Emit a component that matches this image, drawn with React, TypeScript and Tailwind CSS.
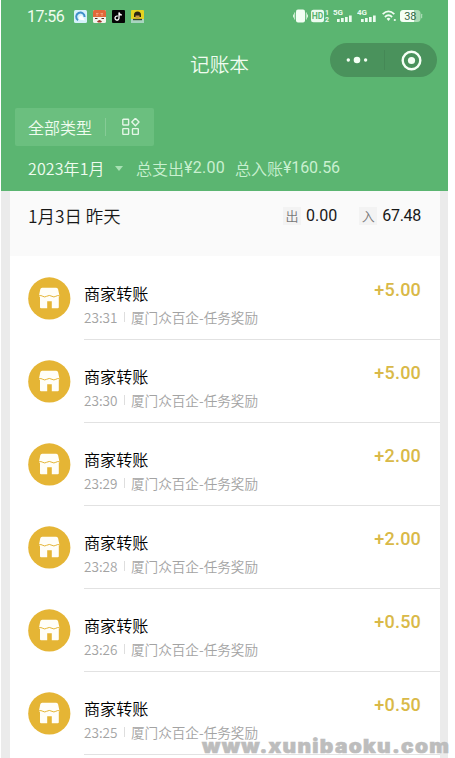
const records = [
    { time: '23:31', amount: '+5.00' },
    { time: '23:30', amount: '+5.00' },
    { time: '23:29', amount: '+2.00' },
    { time: '23:28', amount: '+2.00' },
    { time: '23:26', amount: '+0.50' },
    { time: '23:25', amount: '+0.50' },
]

const AppBadges = () => {
    return (
        <div className="flex gap-[6px] ml-[9px]">
            <svg width="13" height="13" viewBox="0 0 13 13">
                <rect width="13" height="13" rx="1.5" fill="#d5f2fb" />
                <path d="M4 10.2A4.2 4.2 0 1 1 10.6 7" fill="none" stroke="#3f8fc9" strokeWidth="2" />
                <path d="M5 9.5A3 3 0 0 1 8 5.5L11 10.5Z" fill="#fff" />
            </svg>
            <svg width="13" height="13" viewBox="0 0 13 13">
                <rect width="13" height="13" rx="1.5" fill="#f4f3ec" />
                <path d="M1.5 0H11.5Q13 0 13 1.5V7H0V1.5Q0 0 1.5 0Z" fill="#e2683a" />
                <path d="M3 3.5H5.5M7.5 3.5H10M3 5H5M8 5H10" stroke="#f7b08d" strokeWidth="0.8" />
                <path d="M2 8.5H4.5M8.5 8.5H11" stroke="#5a2b20" strokeWidth="1" />
                <path d="M4 11.5Q6.5 8.5 9 11.5L8 12.5H5Z" fill="#a3392b" />
            </svg>
            <svg width="13" height="13" viewBox="0 0 13 13">
                <rect width="13" height="13" rx="1" fill="#050505" />
                <path d="M5.8 6.2A2 2 0 1 0 7 8.2V2.5Q7.5 4.8 9.8 5" fill="none" stroke="#fff" strokeWidth="1.3" />
            </svg>
            <svg width="13" height="13" viewBox="0 0 13 13">
                <rect width="13" height="13" rx="1" fill="#e5d321" />
                <path d="M3 7V5A3.5 3.5 0 0 1 10 5V7Z" fill="#2a2413" />
                <path d="M4.5 5.5H8.5V8H4.5Z" fill="#c99a45" />
                <path d="M0 9H13V13H0Z" fill="#a9d5c0" />
                <path d="M2 9.5H11" stroke="#37412c" strokeWidth="1.4" />
            </svg>
        </div>
    )
}

const Signal = ({ label }: { label: string }) => {
    return (
        <svg width="20" height="14" viewBox="0 0 20 14" fill="#ecfbef">
            <text x="0" y="6.3" fontSize="8" fontWeight="700" fontFamily="Roboto, sans-serif">{label}</text>
            <rect x="4" y="10" width="2.7" height="3" />
            <rect x="8" y="9" width="2.7" height="4" />
            <rect x="12" y="8" width="2.7" height="5" />
            <rect x="16" y="6.5" width="2.7" height="6.5" />
        </svg>
    )
}

const StatusIcons = () => {
    return (
        <div className="flex items-center ml-auto mr-[25px]">
            <svg width="15" height="14" viewBox="0 0 15 14" fill="#f3fff4">
                <rect x="3" y="0.5" width="9" height="13" rx="2" />
                <path d="M1.7 3.5V10.5M13.3 3.5V10.5M0.5 5.5V8.5M14.5 5.5V8.5" stroke="#e6f8e8" strokeWidth="0.9" />
            </svg>
            <svg className="ml-[3px]" width="19" height="14" viewBox="0 0 19 14" fill="#ecfbef" fontFamily="Roboto, sans-serif" fontWeight="700">
                <rect y="0.7" width="13" height="12.5" rx="2.5" />
                <text x="0.8" y="10" fontSize="8.5" fill="#5bb26f">HD</text>
                <text x="14" y="6.2" fontSize="7">1</text>
                <text x="14" y="13.2" fontSize="7">2</text>
            </svg>
            <div className="flex gap-[4px] ml-[3px]">
                <Signal label="5G" />
                <Signal label="4G" />
            </div>
            <svg className="ml-[5px]" width="15" height="12" viewBox="0 0 15 12" fill="none" stroke="#f0fdf2" strokeWidth="1.8">
                <path d="M0.7 4.2Q6.5 -1.4 12.3 4.2M2.9 7Q6.5 3.6 10.1 7" />
                <path d="M4.6 8.7Q6.5 7 8.4 8.7L6.5 11Z" fill="#f0fdf2" stroke="none" />
                <circle cx="12.8" cy="10" r="1.1" fill="#f0fdf2" stroke="none" />
            </svg>
            <svg className="ml-[3px]" width="23" height="12" viewBox="0 0 23 12">
                <rect width="20.5" height="12" rx="3.5" fill="#a9dbb4" />
                <path d="M3.5 0H14V12H3.5A3.5 3.5 0 0 1 0 8.5V3.5A3.5 3.5 0 0 1 3.5 0Z" fill="#f4fff5" />
                <rect x="21" y="3.7" width="1.2" height="4.6" rx="0.6" fill="#a9dbb4" />
                <text x="4.2" y="10" fontSize="11" fontFamily="Roboto, sans-serif" fill="#356846">38</text>
            </svg>
        </div>
    )
}

const ShopIcon = () => {
    return (
        <svg width="43" height="43" viewBox="0 0 43 43">
            <circle cx="21.3" cy="21.4" r="21.1" fill="#e5b535" />
            <path d="M14.2 10.7H28.2Q29.8 10.7 30.1 12.2L31.4 18.6Q31.4 19.8 30.8 20.3V30.2Q30.8 31.3 29.7 31.3H23.8V24.3H19.2V31.3H13.1Q12 31.3 12 30.2V20.3Q11 19.8 11 18.6L12.3 12.2Q12.6 10.7 14.2 10.7Z" fill="#fffef8" />
            <path d="M11 18.8Q13 18.1 14.8 19.3Q16.7 20.6 18.6 19.3Q21.3 17.6 24 19.3Q25.9 20.6 27.8 19.3Q29.6 18.1 31.6 18.8" fill="none" stroke="#e5b535" strokeWidth="1" />
        </svg>
    )
}

const Header = () => {
    return (
        <div className="h-[191px] bg-[#5bb571] text-[#effcef]">
            <div className="flex items-center h-[32px] pl-[26px]">
                <div className="font-['Roboto',sans-serif] text-[16px] tracking-[-0.5px] w-[38px] leading-[33px]">17:56</div>
                <AppBadges />
                <StatusIcons />
            </div>
            <div className="flex items-center h-[56px] pl-[189px] pr-[11px]">
                <div className="text-[19.7px] leading-[30px] pt-[7px] font-[350]">记账本</div>
                <div className="flex items-center ml-auto w-[107px] h-[34px] rounded-full bg-[#4a925c]">
                    <svg className="ml-[16px]" width="22" height="10" viewBox="0 0 22 10" fill="#f5fff5">
                        <circle cx="2.3" cy="5" r="1.7" />
                        <circle cx="11" cy="5" r="3.3" />
                        <circle cx="19.6" cy="5" r="1.7" />
                    </svg>
                    <div className="w-px h-[20px] ml-[16px] bg-[#458856]" />
                    <svg className="ml-[16px]" width="21" height="21" viewBox="0 0 21 21">
                        <circle cx="10.5" cy="10.5" r="8.8" fill="none" stroke="#f5fff5" strokeWidth="2.4" />
                        <circle cx="10.5" cy="10.5" r="3.6" fill="#f5fff5" />
                    </svg>
                </div>
            </div>
            <div className="pt-[20px] pl-[14px]">
                <div className="flex items-center w-[139px] h-[38px] rounded-[2px] bg-[#6bbf7f] pl-[13px]">
                    <div className="text-[16px] leading-[24px] font-[350]">全部类型</div>
                    <div className="w-px h-[18px] ml-[13px] bg-[#86cb96]" />
                    <svg className="ml-[16px]" width="18" height="18" viewBox="0 0 18 18" fill="none" stroke="#e3f6e6" strokeWidth="1.4">
                        <rect x="0.8" y="1.2" width="5.8" height="5.8" rx="0.6" />
                        <path d="M13.4 0.3L17 4L13.4 7.7L9.8 4Z" strokeLinejoin="round" />
                        <rect x="0.8" y="10.6" width="5.8" height="5.8" rx="0.6" />
                        <rect x="10.5" y="10.6" width="5.8" height="5.8" rx="0.6" />
                    </svg>
                </div>
            </div>
            <div className="flex items-center pl-[27px] pt-[10px] text-[16px] leading-[24px] font-[350]">
                <div className="w-[77px] whitespace-nowrap tracking-[0.1px]">2023年1月</div>
                <svg className="ml-[10px]" width="8" height="5" viewBox="0 0 8 5">
                    <path d="M0 0H8L4 5Z" fill="#a8e1b4" />
                </svg>
                <div className="ml-[13px] flex text-[#c9f0d0] whitespace-nowrap">
                    <span>总支出</span>
                    <span className="font-['Roboto',sans-serif] font-normal tracking-[0.3px] w-[51px]">¥2.00</span>
                    <span>总入账</span>
                    <span className="font-['Roboto',sans-serif] font-normal tracking-[-0.1px]">¥160.56</span>
                </div>
            </div>
        </div>
    )
}

const DaySummary = () => {
    return (
        <div className="flex h-[65px] bg-[#fafafa] pt-[12px] pl-[18px] pr-[19px] text-[#181818]">
            <div className="text-[17.4px] leading-[26px] font-[350]">1月3日 昨天</div>
            <div className="flex items-center ml-auto h-[26px] font-['Roboto',sans-serif] text-[16px]">
                <span className="font-['Noto_Sans_CJK_SC',sans-serif] font-[350] text-[13px] leading-[18px] w-[18px] text-center text-[#777] bg-[#f3f3f3]">出</span>
                <span className="ml-[5px]">0.00</span>
                <span className="font-['Noto_Sans_CJK_SC',sans-serif] font-[350] text-[13px] leading-[18px] w-[18px] ml-[22px] text-center text-[#777] bg-[#f3f3f3]">入</span>
                <span className="ml-[5px] tracking-[-0.3px]">67.48</span>
            </div>
        </div>
    )
}

const App = () => {
    return (
        <div className="relative w-[455px] h-[758px] overflow-hidden bg-white pl-px font-['Noto_Sans_CJK_SC',sans-serif]">
            <div className="w-[447px]">
                <Header />
                <div className="h-[567px] bg-[#ebebeb] pl-[9px] pr-[8px]">
                    <div className="h-[567px] bg-white">
                        <DaySummary />
                        {records.map((e) => {
                            return (
                                <div key={e.time} className="flex h-[83px] pl-[18px]">
                                    <div className="pt-[21px]">
                                        <ShopIcon />
                                    </div>
                                    <div className="flex flex-1 justify-between ml-[13px] h-[84px] pr-[19px] border-b border-[#e2e2e2]">
                                        <div className="pt-[25px]">
                                            <div className="text-[16.1px] leading-[24px] font-[350] text-black">商家转账</div>
                                            <div className="flex items-center text-[13.6px] leading-[24px] font-[350] text-[#a3a3a3] whitespace-nowrap">
                                                <span className="w-[34px]">{e.time}</span>
                                                <span className="w-px h-[10px] ml-[6px] mr-[6px] bg-[#dedede]" />
                                                <span>厦门众百企-任务奖励</span>
                                            </div>
                                        </div>
                                        <div className="pt-[22px] font-['Roboto',sans-serif] font-medium text-[18px] leading-[24px] tracking-[0.2px] text-[#d9b948]">{e.amount}</div>
                                    </div>
                                </div>
                            )
                        })}
                    </div>
                </div>
            </div>
            <div className="absolute left-[202px] top-[735px] font-['Inter',sans-serif] font-black text-[19px] leading-[24px] tracking-[1.2px] whitespace-nowrap text-[#bdbdbd] origin-left scale-x-[1.1] [-webkit-text-stroke:0.6px_#bdbdbd]">www.xunibaoku.com</div>
        </div>
    )
}
export default App
